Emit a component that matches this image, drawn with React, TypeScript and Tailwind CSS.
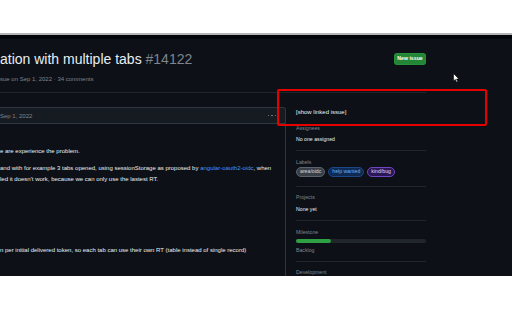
export default function App() {
  return (
    <div className="relative w-[512px] h-[320px] overflow-hidden bg-white font-['Liberation_Sans',Arial,sans-serif]">
      <div className="h-[33px] bg-white" />
      <div className="h-[2px] bg-[#b4b4b4]" />
      <div className="flex h-[241px] flex-col overflow-hidden bg-[#0d1117]">
        <div className="h-[4px] bg-[#010409]" />
        <div className="flex w-[426px] flex-1 flex-col">
          <div className="border-b border-[#21262d] pt-[12px] pb-[9px]">
            <div className="flex h-[16px] items-center justify-between">
              <div className="whitespace-nowrap text-[14px] leading-[16px] text-[#e6edf3]">
                ation with multiple tabs <span className="font-light text-[#7d8590]">#14122</span>
              </div>
              <div className="flex h-[12px] w-[32px] items-center justify-center rounded-[3px] border border-[#2ea043]/40 bg-[#238636] text-[5.2px] font-semibold leading-none text-white">
                New issue
              </div>
            </div>
            <div className="mt-[8px] whitespace-nowrap text-[6px] leading-[8px] text-[#7d8590]">
              sue on Sep 1, 2022 · 34 comments
            </div>
          </div>
          <div className="flex flex-1">
            <div className="flex w-[286px] flex-col">
              <div className="mt-[14px] flex h-[17px] items-center justify-between rounded-tr-[3px] border-y border-r border-[#30363d] bg-[#161b22] pr-[9px]">
                <span className="text-[6px] leading-none text-[#7d8590]">Sep 1, 2022</span>
                <div className="flex gap-[2px]">
                  <span className="h-[1.5px] w-[1.5px] rounded-full bg-[#7d8590]" />
                  <span className="h-[1.5px] w-[1.5px] rounded-full bg-[#7d8590]" />
                  <span className="h-[1.5px] w-[1.5px] rounded-full bg-[#7d8590]" />
                </div>
              </div>
              <div className="flex-1 border-r border-[#30363d] pt-[22px] text-[6px] leading-[11px] text-[#e6edf3] whitespace-nowrap">
                <p>e are experience the problem.</p>
                <p className="mt-[6px]">
                  and with for example 3 tabs opened, using sessionStorage as proposed by{" "}
                  <span className="text-[#4493f8]">angular-oauth2-oidc</span>, when
                  <br />
                  led it doesn't work, because we can only use the lastest RT.
                </p>
                <p className="mt-[60px]">
                  n per initial delivered token, so each tab can use their own RT (table instead of single record)
                </p>
              </div>
            </div>
            <div className="ml-[10px] w-[130px] text-[5.2px] leading-[8px]">
              <div className="pt-[15px] text-[6px] leading-[8px] text-[#e6edf3]">[show linked issue]</div>
              <div className="border-b border-[#21262d] pt-[8px] pb-[7px]">
                <div className="text-[#7d8590]">Assignees</div>
                <div className="mt-[3px] text-[#e6edf3]">No one assigned</div>
              </div>
              <div className="border-b border-[#21262d] pt-[7px] pb-[9px]">
                <div className="text-[#7d8590]">Labels</div>
                <div className="mt-[1px] flex gap-[3px]">
                  <span className="flex h-[10px] items-center rounded-full border border-[#5a626c] bg-[#393f47] px-[3px] font-medium leading-none text-[#d0d7de]">area/oidc</span>
                  <span className="flex h-[10px] items-center rounded-full border border-[#1c4684] bg-[#0e2a52] px-[3px] font-medium leading-none text-[#6cb0ff]">help wanted</span>
                  <span className="flex h-[10px] items-center rounded-full border border-[#6e46c0] bg-[#2b1755] px-[3px] font-medium leading-none text-[#e4d6ff]">kind/bug</span>
                </div>
              </div>
              <div className="border-b border-[#21262d] pt-[6px] pb-[7px]">
                <div className="text-[#7d8590]">Projects</div>
                <div className="mt-[4px] text-[#e6edf3]">None yet</div>
              </div>
              <div className="border-b border-[#21262d] pt-[7px] pb-[7px]">
                <div className="text-[#7d8590]">Milestone</div>
                <div className="mt-[3px] h-[4px] w-full rounded-full bg-[#21262d]">
                  <div className="h-[4px] w-[35px] rounded-full bg-[#2ea043]" />
                </div>
                <div className="mt-[3px] text-[#7d8590]">Backlog</div>
              </div>
              <div className="pt-[6px]">
                <div className="text-[#7d8590]">Development</div>
              </div>
            </div>
          </div>
        </div>
      </div>
      <div className="h-[44px] bg-white" />

      <div className="absolute left-[277px] top-[89px] h-[37px] w-[210px] rounded-[2px] border-2 border-[#e50000]" />
      <svg className="absolute left-[453px] top-[73px]" width="7" height="10" viewBox="0 0 7 10">
        <path d="M0.5 0.5 L0.5 8 L2.3 6.4 L3.6 9.3 L4.8 8.8 L3.6 6 L6 6 Z" fill="white" stroke="black" strokeWidth="0.6" strokeLinejoin="round" />
      </svg>
    </div>
  );
}
